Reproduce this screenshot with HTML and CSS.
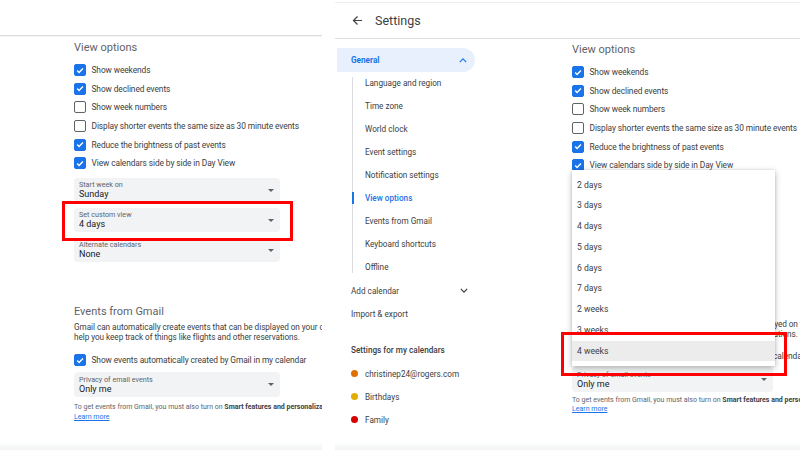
FILE: index.html
```html
<!DOCTYPE html>
<html lang="en">
<head>
<meta charset="utf-8">
<title>Settings - View options</title>
<link rel="stylesheet" href="styles.css">
</head>
<body>
<div class="page">
  <section class="shot shot-left">
    <div class="topbar"></div>
    <div class="content">
      <h2 class="sec-title">View options</h2>
      <ul class="checks">
        <li class="check"><span class="cb on"><svg viewBox="0 0 12 12"><path d="M2.6 6.1l2.3 2.3 4.6-4.7"/></svg></span>Show weekends</li>
        <li class="check"><span class="cb on"><svg viewBox="0 0 12 12"><path d="M2.6 6.1l2.3 2.3 4.6-4.7"/></svg></span>Show declined events</li>
        <li class="check"><span class="cb"></span>Show week numbers</li>
        <li class="check"><span class="cb"></span>Display shorter events the same size as 30 minute events</li>
        <li class="check"><span class="cb on"><svg viewBox="0 0 12 12"><path d="M2.6 6.1l2.3 2.3 4.6-4.7"/></svg></span>Reduce the brightness of past events</li>
        <li class="check"><span class="cb on"><svg viewBox="0 0 12 12"><path d="M2.6 6.1l2.3 2.3 4.6-4.7"/></svg></span>View calendars side by side in Day View</li>
      </ul>
      <div class="selects">
        <div class="select"><div class="sel-text"><span class="sel-label">Start week on</span><span class="sel-value">Sunday</span></div><span class="caret"></span></div>
        <div class="select"><div class="sel-text"><span class="sel-label">Set custom view</span><span class="sel-value">4 days</span></div><span class="caret"></span></div>
        <div class="select"><div class="sel-text"><span class="sel-label">Alternate calendars</span><span class="sel-value">None</span></div><span class="caret"></span></div>
      </div>
      <h2 class="sec-title gmail-title">Events from Gmail</h2>
      <p class="para">Gmail can automatically create events that can be displayed on your calendar to<br>help you keep track of things like flights and other reservations.</p>
      <div class="check gmail-check"><span class="cb on"><svg viewBox="0 0 12 12"><path d="M2.6 6.1l2.3 2.3 4.6-4.7"/></svg></span>Show events automatically created by Gmail in my calendar</div>
      <div class="select privacy"><div class="sel-text"><span class="sel-label">Privacy of email events</span><span class="sel-value">Only me</span></div><span class="caret"></span></div>
      <p class="fine">To get events from Gmail, you must also turn on <b>Smart features and personalization</b><br><a href="#" class="learn">Learn more</a></p>
    </div>
    <div class="bottom-band"></div>
    <div class="redbox red-left"></div>
  </section>

  <section class="shot shot-right">
    <header class="settings-header">
      <svg class="back" viewBox="0 0 12 12"><path d="M11 6H1.8M6 1.6L1.6 6 6 10.4"/></svg>
      <h1>Settings</h1>
    </header>
    <div class="body">
      <nav class="nav">
        <div class="nav-general">General<svg class="chev" viewBox="0 0 10 6"><path d="M1 5l4-4 4 4"/></svg></div>
        <ul class="sublist">
          <li>Language and region</li>
          <li>Time zone</li>
          <li>World clock</li>
          <li>Event settings</li>
          <li>Notification settings</li>
          <li class="active">View options</li>
          <li>Events from Gmail</li>
          <li>Keyboard shortcuts</li>
          <li>Offline</li>
        </ul>
        <div class="nav-item">Add calendar<svg class="chev" viewBox="0 0 10 6"><path d="M1 1l4 4 4-4"/></svg></div>
        <div class="nav-item">Import &amp; export</div>
        <div class="nav-heading">Settings for my calendars</div>
        <ul class="cals">
          <li><span class="dot orange"></span>christinep24@rogers.com</li>
          <li><span class="dot yellow"></span>Birthdays</li>
          <li><span class="dot red"></span>Family</li>
        </ul>
      </nav>
      <main class="content">
        <h2 class="sec-title">View options</h2>
        <ul class="checks">
          <li class="check"><span class="cb on"><svg viewBox="0 0 12 12"><path d="M2.6 6.1l2.3 2.3 4.6-4.7"/></svg></span>Show weekends</li>
          <li class="check"><span class="cb on"><svg viewBox="0 0 12 12"><path d="M2.6 6.1l2.3 2.3 4.6-4.7"/></svg></span>Show declined events</li>
          <li class="check"><span class="cb"></span>Show week numbers</li>
          <li class="check"><span class="cb"></span>Display shorter events the same size as 30 minute events</li>
          <li class="check"><span class="cb on"><svg viewBox="0 0 12 12"><path d="M2.6 6.1l2.3 2.3 4.6-4.7"/></svg></span>Reduce the brightness of past events</li>
          <li class="check"><span class="cb on"><svg viewBox="0 0 12 12"><path d="M2.6 6.1l2.3 2.3 4.6-4.7"/></svg></span>View calendars side by side in Day View</li>
        </ul>
        <div class="selects">
          <div class="select"><div class="sel-text"><span class="sel-label">Start week on</span><span class="sel-value">Sunday</span></div><span class="caret"></span></div>
          <div class="select"><div class="sel-text"><span class="sel-label">Set custom view</span><span class="sel-value">4 days</span></div><span class="caret"></span></div>
          <div class="select"><div class="sel-text"><span class="sel-label">Alternate calendars</span><span class="sel-value">None</span></div><span class="caret"></span></div>
        </div>
        <h2 class="sec-title gmail-title">Events from Gmail</h2>
        <p class="para">Gmail can automatically create events that can be displayed on your calendar to<br>help you keep track of things like flights and other reservations.</p>
        <div class="check gmail-check"><span class="cb on"><svg viewBox="0 0 12 12"><path d="M2.6 6.1l2.3 2.3 4.6-4.7"/></svg></span>Show events automatically created by Gmail in my calendar</div>
        <div class="select privacy"><div class="sel-text"><span class="sel-label">Privacy of email events</span><span class="sel-value">Only me</span></div><span class="caret"></span></div>
        <p class="fine">To get events from Gmail, you must also turn on <b>Smart features and personalization</b><br><a href="#" class="learn">Learn more</a></p>
      </main>
    </div>
    <div class="bottom-band"></div>
    <ul class="menu">
      <li>2 days</li>
      <li>3 days</li>
      <li>4 days</li>
      <li>5 days</li>
      <li>6 days</li>
      <li>7 days</li>
      <li>2 weeks</li>
      <li>3 weeks</li>
      <li class="hl">4 weeks</li>
    </ul>
    <div class="redbox red-right"></div>
  </section>
</div>
</body>
</html>
```
FILE: styles.css
```css
* { box-sizing: border-box; }
html, body { margin: 0; padding: 0; background: #fff; }
body { font-family: Roboto, "Noto Sans", Arial, sans-serif; color: #3c4043; }
ul { list-style: none; margin: 0; padding: 0; }
p, h1, h2 { margin: 0; }

.page { display: flex; width: 800px; height: 450px; overflow: hidden; gap: 13px; }
.shot { position: relative; height: 450px; overflow: hidden; display: flex; flex-direction: column; background: #fff; }
.shot-left { width: 322px; flex: none; }
.shot-right { flex: 1; }

.topbar { height: 36px; border-bottom: 1px solid #dadce0; box-shadow: 0 1px 1px rgba(0,0,0,.04); flex: none; }

.content { white-space: nowrap; }
.shot-left .content { padding-left: 74px; }

.sec-title { font-size: 11px; line-height: 14px; font-weight: 400; color: #5f6368; margin-top: 5px; }
.checks { margin-top: 6px; }
.check { display: flex; align-items: center; height: 18.6px; font-size: 8.4px; letter-spacing: -0.1px; color: #3c4043; }
.cb { width: 12px; height: 12px; border: 1.6px solid #5f6368; border-radius: 2px; margin-right: 5.5px; flex: none; display: flex; align-items: center; justify-content: center; background: #fff; }
.cb.on { background: #1a73e8; border-color: #1a73e8; }
.cb svg { width: 11px; height: 11px; }
.cb path { stroke: #fff; stroke-width: 1.7; fill: none; }

.selects { display: flex; flex-direction: column; gap: 6px; margin-top: 5.7px; }
.select { width: 206px; height: 24px; background: #f1f3f4; border-radius: 4px; display: flex; align-items: center; justify-content: space-between; padding: 0 6px 0 5px; }
.sel-text { display: flex; flex-direction: column; }
.sel-label { font-size: 7.2px; line-height: 9px; color: #5f6368; }
.sel-value { font-size: 9px; line-height: 11px; color: #202124; }
.caret { width: 0; height: 0; border-left: 3px solid transparent; border-right: 3px solid transparent; border-top: 3px solid #5f6368; }

.gmail-title { margin-top: 43px; }
.para { font-size: 8.2px; letter-spacing: -0.05px; line-height: 10px; margin-top: 3px; color: #3c4043; }
.gmail-check { margin-top: 8.5px; }
.privacy { height: 25px; margin-top: 2.7px; }
.fine { font-size: 7px; line-height: 10px; color: #5f6368; margin-top: 5px; }
.fine b { color: #3c4043; font-weight: 700; }
.learn { color: #1a73e8; text-decoration: underline; }

.bottom-band { margin-top: auto; height: 8px; background: linear-gradient(#fff, #f1f3f4); flex: none; }

.redbox { position: absolute; border: 3px solid #ff0000; }
.red-left { left: 62px; top: 201px; width: 231px; height: 40px; }
.red-right { left: 226px; top: 332px; width: 226px; height: 44px; }

/* right screenshot */
.settings-header { flex: none; margin-top: 2px; height: 37px; border-top: 1px solid #eceef0; border-bottom: 1px solid #dadce0; display: flex; align-items: center; padding-left: 17px; gap: 12px; }
.back { width: 11px; height: 11px; }
.back path { stroke: #3c4043; stroke-width: 1.3; fill: none; }
.settings-header h1 { font-size: 12.5px; font-weight: 400; color: #3c4043; }

.body { display: flex; }
.nav { width: 145px; flex: none; padding-top: 9px; font-size: 8.2px; white-space: nowrap; }
.nav-general { margin-left: 2px; width: 138px; height: 24px; background: #e8f0fe; border-radius: 0 12px 12px 0; color: #1a73e8; font-weight: 700; display: flex; align-items: center; justify-content: space-between; padding: 0 8px 0 14px; }
.chev { width: 8px; height: 5px; }
.chev path { fill: none; stroke: #3c4043; stroke-width: 1.5; }
.nav-general .chev path { stroke: #1a73e8; }
.sublist { margin-left: 17px; position: relative; }
.sublist::before { content: ""; position: absolute; left: 0; top: 5px; bottom: 6px; width: 1px; background: #dadce0; }
.sublist li { height: 23px; line-height: 23px; padding-left: 13px; position: relative; }
.sublist li.active { color: #1a73e8; font-weight: 500; }
.sublist li.active::before { content: ""; position: absolute; left: 0; top: 5px; width: 2px; height: 12px; background: #1a73e8; }
.nav-item { height: 23px; display: flex; align-items: center; justify-content: space-between; padding: 0 9px 0 16px; width: 142px; }
.nav-heading { margin-top: 14px; height: 23px; line-height: 23px; padding-left: 16px; font-weight: 500; color: #3c4043; }
.cals li { height: 23px; display: flex; align-items: center; padding-left: 16px; }
.dot { width: 7px; height: 7px; border-radius: 50%; margin-right: 7px; }
.dot.orange { background: #e07000; }
.dot.yellow { background: #e0ad00; }
.dot.red { background: #d50000; }

.shot-right .content { flex: 1; padding-left: 92px; }
.shot-right .sec-title { margin-top: 4px; }
.shot-right .select { width: 201px; }
.shot-right .gmail-title { margin-top: 38px; }
.shot-right .gmail-check { margin-top: 7.5px; }
.shot-right .privacy { margin-top: 2px; }
.shot-right .fine { margin-top: 4px; line-height: 8.5px; }

.menu { position: absolute; left: 237px; top: 170px; width: 203px; height: 196px; background: #fff; box-shadow: 0 2px 6px rgba(0,0,0,.28), 0 0 2px rgba(0,0,0,.12); padding: 4.6px 0; }
.menu li { height: 20.75px; line-height: 20.75px; font-size: 8.6px; padding-left: 5px; color: #3c4043; }
.menu li.hl { background: #ececec; }
```
